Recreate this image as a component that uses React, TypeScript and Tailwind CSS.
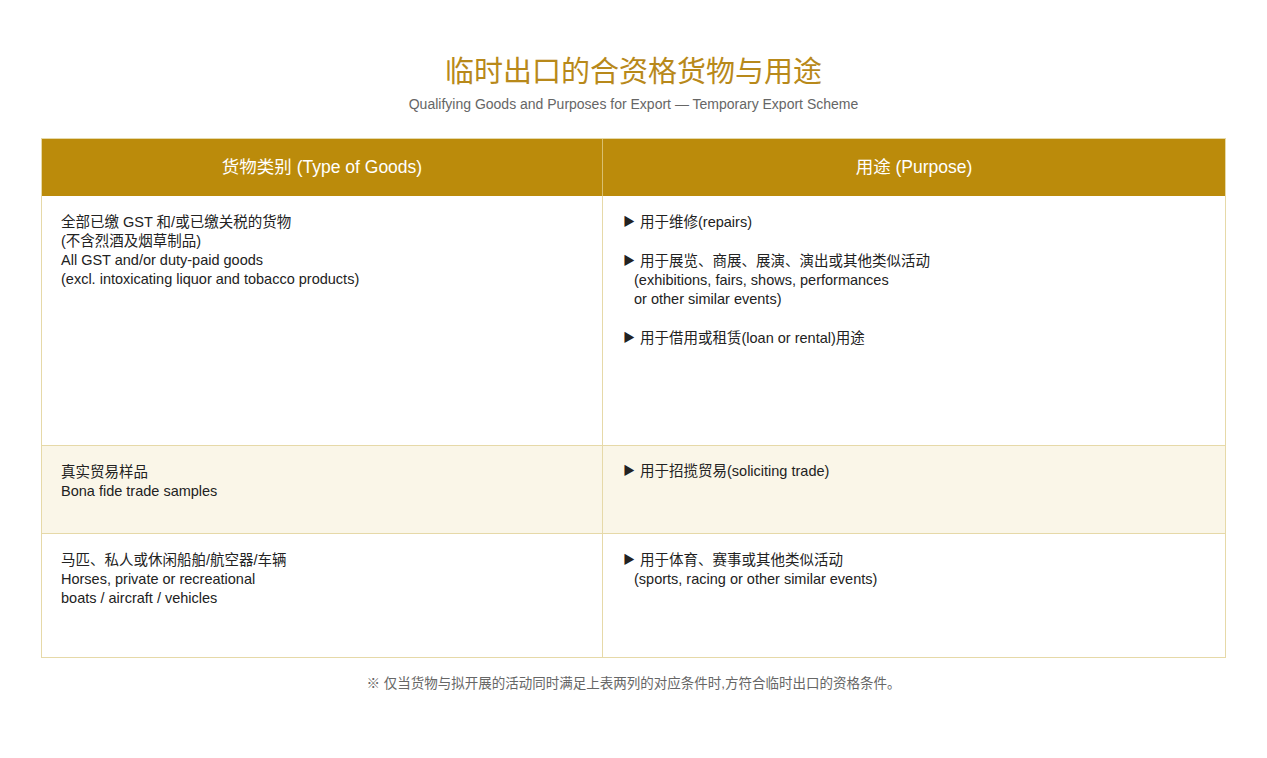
export default function App() {
  const f = { fontFamily: '"Liberation Sans Narrow","Liberation Sans","Noto Sans CJK SC",sans-serif' };
  const Item = ({ zh, en }: { zh: string; en?: string[] }) => (
    <div className="mb-[20px]">
      <div className="flex"><span className="w-[17px] text-[12px]">▶</span><span>{zh}</span></div>
      {en && en.map((l, i) => <div key={i} className="pl-[11px]">{l}</div>)}
    </div>
  );
  return (
    <div className="w-[1267px] h-[758px] bg-white text-[#222] text-[14.5px] leading-[19px]" style={f}>
      <div className="pt-[54px] text-center">
        <div className="text-[29px] leading-[36px] text-[#b8891a]">临时出口的合资格货物与用途</div>
        <div className="text-[14px] text-[#666] mt-[5px]">Qualifying Goods and Purposes for Export — Temporary Export Scheme</div>
      </div>
      <div className="mx-[41px] mt-[24px] w-[1185px] border border-[#e6d9a8]">
        <div className="grid grid-cols-[561px_1fr] bg-[#bb8b0b] text-white text-[17.5px] h-[57px]">
          <div className="flex items-center justify-center border-r border-[#d9bf6f]">货物类别 (Type of Goods)</div>
          <div className="flex items-center justify-center">用途 (Purpose)</div>
        </div>
        <div className="grid grid-cols-[561px_1fr] h-[250px] border-b border-[#e6d9a8]">
          <div className="border-r border-[#e6d9a8] pl-[19px] pt-[17px]">
            <div>全部已缴 GST 和/或已缴关税的货物</div>
            <div>(不含烈酒及烟草制品)</div>
            <div>All GST and/or duty-paid goods</div>
            <div>(excl. intoxicating liquor and tobacco products)</div>
          </div>
          <div className="pl-[20px] pt-[17px]">
            <Item zh="用于维修(repairs)" />
            <Item zh="用于展览、商展、展演、演出或其他类似活动" en={["(exhibitions, fairs, shows, performances", "or other similar events)"]} />
            <Item zh="用于借用或租赁(loan or rental)用途" />
          </div>
        </div>
        <div className="grid grid-cols-[561px_1fr] h-[88px] border-b border-[#e6d9a8] bg-[#faf6e8]">
          <div className="border-r border-[#e6d9a8] pl-[19px] pt-[17px]">
            <div>真实贸易样品</div>
            <div>Bona fide trade samples</div>
          </div>
          <div className="pl-[20px] pt-[16px]">
            <Item zh="用于招揽贸易(soliciting trade)" />
          </div>
        </div>
        <div className="grid grid-cols-[561px_1fr] h-[123px]">
          <div className="border-r border-[#e6d9a8] pl-[19px] pt-[17px]">
            <div>马匹、私人或休闲船舶/航空器/车辆</div>
            <div>Horses, private or recreational</div>
            <div>boats / aircraft / vehicles</div>
          </div>
          <div className="pl-[20px] pt-[17px]">
            <Item zh="用于体育、赛事或其他类似活动" en={["(sports, racing or other similar events)"]} />
          </div>
        </div>
      </div>
      <div className="text-center text-[13.5px] text-[#666] mt-[16px]">※ 仅当货物与拟开展的活动同时满足上表两列的对应条件时,方符合临时出口的资格条件。</div>
    </div>
  );
}
